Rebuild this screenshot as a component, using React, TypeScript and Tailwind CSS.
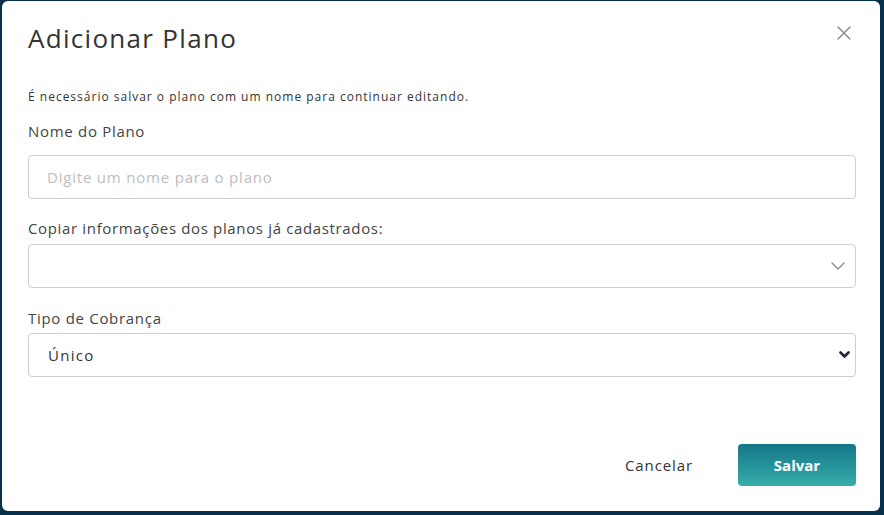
import React from 'react';

const font = { fontFamily: '"Open Sans", "Noto Sans", sans-serif' };

const ChevronThin = () => (
  <svg width="14" height="8" viewBox="0 0 14 8" fill="none">
    <path d="M1 1l6 6 6-6" stroke="#8a8a8a" strokeWidth="1.4" strokeLinecap="round" strokeLinejoin="round" />
  </svg>
);

const ChevronBold = () => (
  <svg width="11" height="8" viewBox="0 0 11 8" fill="none">
    <path d="M1.5 1.5l4 4 4-4" stroke="#1f2a36" strokeWidth="2.6" strokeLinecap="round" strokeLinejoin="round" />
  </svg>
);

const App: React.FC = () => {
  return (
    <div className="h-[515px] w-full bg-[#08304a] pt-[1px] pl-[2px] pr-[4px] pb-[4px]" style={font}>
      <div className="h-full w-full rounded-md bg-white pl-[26px] pr-[24px] flex flex-col">
        {/* Header */}
        <div className="flex items-start justify-between pt-[21px]">
          <h2 className="text-[26px] leading-[32px] tracking-[1.3px] text-[#333]">Adicionar Plano</h2>
          <button className="mt-[3px] mr-[4px] text-[#888]" aria-label="Fechar">
            <svg width="16" height="16" viewBox="0 0 16 16" fill="none">
              <path d="M2 2l12 12M14 2L2 14" stroke="#8c8c8c" strokeWidth="1.5" strokeLinecap="round" />
            </svg>
          </button>
        </div>

        <p className="mt-[34px] text-[12px] leading-[18px] tracking-[1px] text-[#333]">
          É necessário salvar o plano com um nome para continuar editando.
        </p>

        <label className="mt-[15px] text-[15px] leading-[20px] tracking-[0.7px] text-[#444]">Nome do Plano</label>
        <input
          className="mt-[14px] h-[44px] w-full rounded-[4px] border border-[#cfcfcf] px-[18px] text-[15px] tracking-[0.8px] text-[#333] outline-none placeholder:text-[#bdbdbd]"
          placeholder="Digite um nome para o plano"
        />

        <label className="mt-[19px] text-[15px] leading-[20px] tracking-[0.65px] text-[#444]">
          Copiar informações dos planos já cadastrados:
        </label>
        <div className="mt-[6px] h-[44px] w-full rounded-[4px] border border-[#cfcfcf] flex items-center justify-end pr-[10px]">
          <ChevronThin />
        </div>

        <label className="mt-[20px] text-[15px] leading-[20px] tracking-[0.7px] text-[#444]">Tipo de Cobrança</label>
        <div className="mt-[5px] h-[44px] w-full rounded-[4px] border border-[#cfcfcf] flex items-center justify-between pl-[19px] pr-[5px]">
          <span className="text-[15px] tracking-[1.3px] text-[#333]">Único</span>
          <ChevronBold />
        </div>

        {/* Footer */}
        <div className="mt-[67px] flex items-center justify-end gap-[45px]">
          <button className="text-[15px] tracking-[0.9px] text-[#333]">Cancelar</button>
          <button className="h-[42px] w-[118px] rounded-[4px] bg-gradient-to-b from-[#137687] to-[#38aeab] text-[15px] font-bold text-white">
            Salvar
          </button>
        </div>
      </div>
    </div>
  );
};

export default App;
